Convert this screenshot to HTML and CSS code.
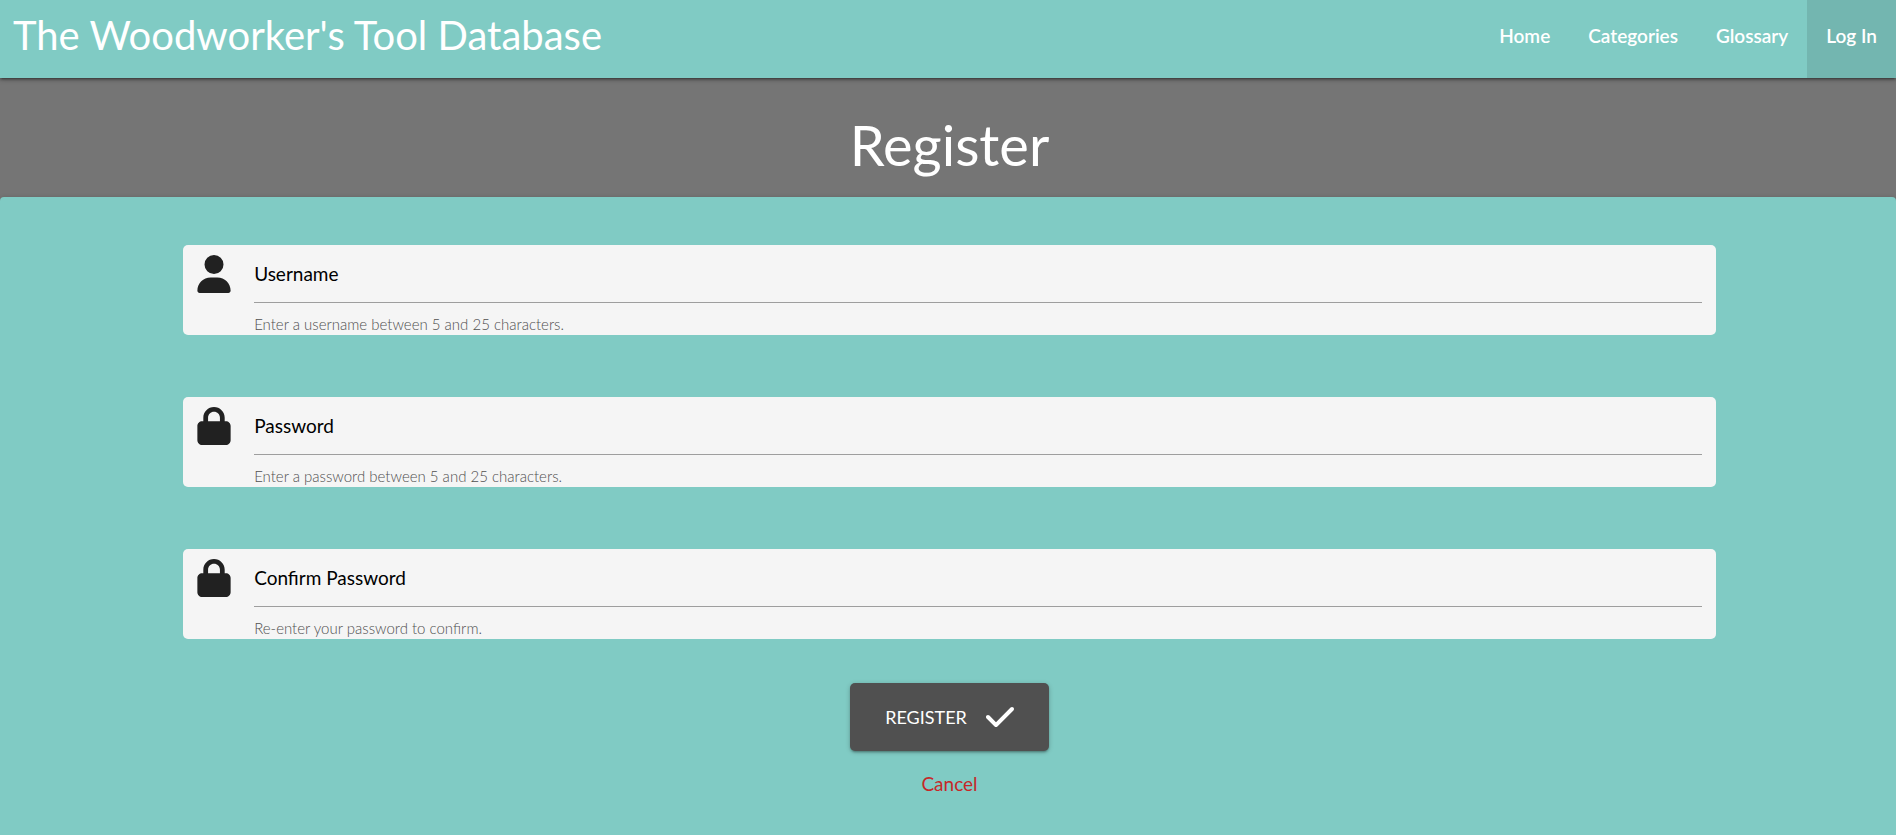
FILE: index.html
```html
<!DOCTYPE html>
<html lang="en">
<head>
<meta charset="utf-8">
<title>Register</title>
<link rel="stylesheet" href="styles.css">
</head>
<body>
<nav class="navbar">
  <a class="brand" href="#">The Woodworker's Tool Database</a>
  <ul class="nav-links">
    <li><a href="#">Home</a></li>
    <li><a href="#">Categories</a></li>
    <li><a href="#">Glossary</a></li>
    <li class="active"><a href="#">Log In</a></li>
  </ul>
</nav>
<header class="page-title"><h1>Register</h1></header>
<main class="panel">
  <form class="register-form">
    <div class="field">
      <svg class="field-icon" viewBox="0 0 448 512" aria-hidden="true"><path d="M224 256A128 128 0 1 0 224 0a128 128 0 1 0 0 256zm-45.700 48C79.800 304 0 383.800 0 482.300C0 498.700 13.300 512 29.700 512H418.300c16.400 0 29.700-13.300 29.700-29.700C448 383.800 368.200 304 269.700 304H178.300z"/></svg>
      <div class="field-body">
        <input id="username" type="text" aria-describedby="username-help">
        <label for="username">Username</label>
        <span class="helper" id="username-help">Enter a username between 5 and 25 characters.</span>
      </div>
    </div>
    <div class="field">
      <svg class="field-icon" viewBox="0 0 448 512" aria-hidden="true"><path d="M144 144v48H304V144c0-44.200-35.800-80-80-80s-80 35.800-80 80zM80 192V144C80 64.500 144.500 0 224 0s144 64.500 144 144v48h16c35.300 0 64 28.700 64 64V448c0 35.300-28.700 64-64 64H64c-35.300 0-64-28.700-64-64V256c0-35.300 28.700-64 64-64H80z"/></svg>
      <div class="field-body">
        <input id="password" type="password" aria-describedby="password-help">
        <label for="password">Password</label>
        <span class="helper" id="password-help">Enter a password between 5 and 25 characters.</span>
      </div>
    </div>
    <div class="field">
      <svg class="field-icon" viewBox="0 0 448 512" aria-hidden="true"><path d="M144 144v48H304V144c0-44.200-35.800-80-80-80s-80 35.800-80 80zM80 192V144C80 64.500 144.500 0 224 0s144 64.500 144 144v48h16c35.300 0 64 28.700 64 64V448c0 35.300-28.700 64-64 64H64c-35.300 0-64-28.700-64-64V256c0-35.300 28.700-64 64-64H80z"/></svg>
      <div class="field-body">
        <input id="confirm" type="password" aria-describedby="confirm-help">
        <label for="confirm">Confirm Password</label>
        <span class="helper" id="confirm-help">Re-enter your password to confirm.</span>
      </div>
    </div>
    <div class="actions">
      <button class="submit" type="submit">REGISTER
        <svg viewBox="0 0 448 512" aria-hidden="true"><path d="M438.600 105.400c12.500 12.500 12.500 32.800 0 45.300l-256 256c-12.500 12.500-32.800 12.500-45.300 0l-128-128c-12.500-12.500-12.500-32.800 0-45.300s32.800-12.500 45.300 0L160 338.700 393.400 105.400c12.500-12.500 32.800-12.500 45.300 0z"/></svg>
      </button>
      <a class="cancel" href="#">Cancel</a>
    </div>
  </form>
</main>
</body>
</html>
```
FILE: styles.css
```css
* { box-sizing: border-box; }

body {
  margin: 0;
  min-height: 100vh;
  display: flex;
  flex-direction: column;
  background: #757575;
  font-family: "Lato", "Liberation Sans", sans-serif;
  font-size: 19px;
}

a { text-decoration: none; }

.navbar {
  position: relative;
  display: flex;
  justify-content: space-between;
  background: #80cbc4;
  box-shadow: 0 2px 2px 0 rgba(0, 0, 0, .14), 0 3px 1px -2px rgba(0, 0, 0, .12), 0 1px 5px 0 rgba(0, 0, 0, .4);
}

.brand {
  padding-left: 13px;
  color: #fff;
  font-size: 40px;
  line-height: 70px;
}

.nav-links {
  display: flex;
  margin: 0;
  padding: 0;
  list-style: none;
}

.nav-links a {
  display: block;
  padding: 0 19px 6px;
  color: #fff;
  font-size: 19px;
  font-weight: 600;
  line-height: 72px;
}

.active { background: rgba(0, 0, 0, .1); }

.page-title {
  padding: 33px 0 18px 3px;
  text-align: center;
}

.page-title h1 {
  margin: 0;
  color: #fff;
  font-size: 56px;
  font-weight: 400;
  line-height: 68px;
}

.panel {
  flex: 1;
  padding-top: 48px;
  background: #80cbc4;
  border-radius: 4px 4px 0 0;
  box-shadow: 0 1px 5px 0 rgba(0, 0, 0, .2);
}

.register-form {
  display: flex;
  flex-direction: column;
  gap: 62px;
  width: 81%;
  margin: 0 auto;
  padding-left: 3px;
}

.field {
  display: flex;
  gap: 23px;
  padding: 0 14px;
  background: #f5f5f5;
  border-radius: 5px;
}

.field-icon {
  flex: none;
  width: 34px;
  height: 38px;
  margin-top: 10px;
  fill: #212121;
}

.field-body {
  position: relative;
  flex: 1;
}

.field input {
  display: block;
  width: 100%;
  height: 58px;
  padding: 0;
  border: 0;
  border-bottom: 1px solid #9e9e9e;
  outline: 0;
  background: transparent;
  font: inherit;
}

.field label {
  position: absolute;
  top: 0;
  left: 0;
  color: #000;
  line-height: 58px;
}

.helper {
  display: block;
  padding: 11px 0 1px;
  color: #505050;
  font-size: 15px;
  font-weight: 300;
  line-height: 20px;
}

.actions {
  display: flex;
  flex-direction: column;
  align-items: center;
  gap: 20px;
  margin-top: -18px;
}

.submit {
  display: flex;
  align-items: center;
  gap: 19px;
  height: 68px;
  padding: 0 35px;
  border: 0;
  border-radius: 5px;
  background: #505050;
  box-shadow: 0 2px 2px 0 rgba(0, 0, 0, .14), 0 3px 1px -2px rgba(0, 0, 0, .12), 0 1px 5px 0 rgba(0, 0, 0, .2);
  color: #fff;
  font: inherit;
  font-size: 18px;
}

.submit svg {
  width: 28px;
  height: 32px;
  fill: #fff;
}

.cancel {
  color: #c62828;
  line-height: 26px;
}
```
